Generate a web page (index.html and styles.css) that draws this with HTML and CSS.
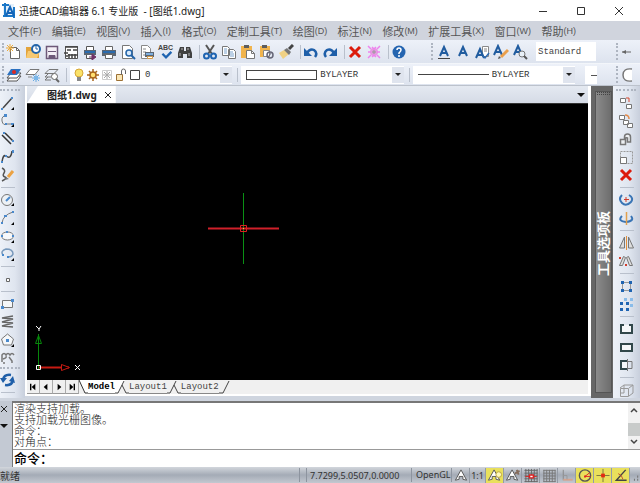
FILE: index.html
```
<!DOCTYPE html>
<html lang="zh-CN">
<head>
  <meta charset="UTF-8" />
  <meta name="viewport" content="width=device-width, initial-scale=1.0"/>
  <title>迅捷CAD编辑器 6.1 专业版</title>
  <link rel="stylesheet" href="styles.css">
</head>
<body>

  <header class="titlebar">
    <svg class="logo" viewBox="0 0 14 16"><path d="M1 1h11v12H1z" fill="#e4f1fc"/><path d="M0 2h7M3 0v14M1 13h12M12 4v11" stroke="#1c78c8" stroke-width="2" fill="none"/><path d="M4 13L8 4l4 9M6 10h5" stroke="#1565b8" stroke-width="2" fill="none"/></svg>
    <h1>迅捷CAD编辑器 6.1 专业版&nbsp; - [图纸1.dwg]</h1>
    <div class="window-buttons">
      <button aria-label="最小化"><svg viewBox="0 0 10 10"><path d="M1 5.5h8" stroke="#333"/></svg></button>
      <button aria-label="最大化"><svg viewBox="0 0 10 10"><path d="M1.5 1.5h7v7h-7z" stroke="#333" fill="none"/></svg></button>
      <button aria-label="关闭"><svg viewBox="0 0 10 10"><path d="M1 1l8 8M9 1l-8 8" stroke="#333"/></svg></button>
    </div>
  </header>

  <nav class="menu">
    <button>文件<small>(F)</small></button>
    <button>编辑<small>(E)</small></button>
    <button>视图<small>(V)</small></button>
    <button>插入<small>(I)</small></button>
    <button>格式<small>(O)</small></button>
    <button>定制工具<small>(T)</small></button>
    <button>绘图<small>(D)</small></button>
    <button>标注<small>(N)</small></button>
    <button>修改<small>(M)</small></button>
    <button>扩展工具<small>(X)</small></button>
    <button>窗口<small>(W)</small></button>
    <button>帮助<small>(H)</small></button>
  </nav>

  <div class="bar">
    <div class="tools standard">
      <i class="grip"></i>
      <button aria-label="新建"><svg viewBox="0 0 16 16"><path d="M4.500 3.500h6l3 3v8h-9z" fill="#fff" stroke="#666"/><path d="M10.500 3.500v3h3" fill="none" stroke="#666"/><path d="M4 0v8M0 4h8M1 1l6 6M7 1L1 7" stroke="#edaa38"/></svg></button>
      <button aria-label="打开"><svg viewBox="0 0 16 16"><path d="M1 3h5l1 2h7v9H1z" fill="#e3a43c"/><path d="M3 7h12l-3 7H1z" fill="#f7c971"/><circle cx="11" cy="5" r="4" fill="#fff" stroke="#2464a8" stroke-width="2"/><path d="M11 2v3h2" stroke="#2464a8" fill="none"/></svg></button>
      <button aria-label="保存"><svg viewBox="0 0 16 16"><path d="M2.500 2.500h11v12h-11z" fill="#f4eff6" stroke="#6d5878" stroke-width="1.500"/><path d="M4 7.500h8M5 11.500h6v3H5z" stroke="#6d5878" fill="#6d5878"/></svg></button>
      <button aria-label="另存为"><svg viewBox="0 0 16 16"><path d="M2.500 2.500h12v12h-12z" fill="#fff" stroke="#555"/><path d="M2 3h13M4 6h4M10 6h4M1 9h4M3 12h2M6 10v4M9 10v4M12 10v4M5 11h10" stroke="#444" stroke-width="1.500"/></svg></button>
      <button aria-label="导出打印"><svg viewBox="0 0 16 16"><path d="M4.500 2.500h7v4h-7zM4.500 10.500h7v4h-7z" fill="#fff" stroke="#555"/><path d="M2 6h12v5H2z" fill="#5b6571"/><path d="M3 7h10v2H3z" fill="#2b6bad"/><path d="M7 13h5M10 10l4 3-4 3z" fill="#713369" stroke="#713369"/></svg></button>
      <button aria-label="打印"><svg viewBox="0 0 16 16"><path d="M4.500 2.500h7v4h-7z" fill="#fff" stroke="#666"/><path d="M1 6h14v6H1z" fill="#5b6571"/><path d="M2 7h12v2H2z" fill="#2b6bad"/><path d="M4.500 10.500h7v4h-7z" fill="#fff" stroke="#666"/></svg></button>
      <button aria-label="打印预览"><svg viewBox="0 0 16 16"><path d="M2.500 1.500h7l3 3v10h-10z" fill="#fff" stroke="#777"/><circle cx="9" cy="9" r="3" fill="#d8eafb" stroke="#2464a8" stroke-width="1.500"/><path d="M11 11l4 4" stroke="#2464a8" stroke-width="2"/></svg></button>
      <button aria-label="发布"><svg viewBox="0 0 16 16"><path d="M2.500 1.500h6l3 3v10h-9z" fill="#fff" stroke="#888"/><path d="M4 5h3M4 8h3M4 11h2" stroke="#888"/><path d="M6 8h9v5H6z" fill="#5b6571"/><path d="M7 9h7v2H7z" fill="#7daede"/><path d="M8.500 12.500h5v2h-5z" fill="#fff" stroke="#d49a48"/></svg></button>
      <button aria-label="拼写检查" class="spell"><b>ABC</b><svg viewBox="0 0 16 10"><path d="M4 3l4 4 6-6" stroke="#1e63b1" stroke-width="2.500" fill="none"/></svg></button>
      <button aria-label="查找"><svg viewBox="0 0 16 16"><path d="M3 3h4v4h2V3h4l2 6v5h-5v-4H6v4H1V9z" fill="#414141"/><path d="M3 9v3M12 9v3M4 5h2M10 5h2" stroke="#bbb"/></svg></button>
      <i class="sep"></i>
      <button aria-label="剪切"><svg viewBox="0 0 16 16"><path d="M4 1l6 9M12 1L6 10" stroke="#555" stroke-width="2"/><circle cx="4.500" cy="12" r="2.500" fill="none" stroke="#1e63b1" stroke-width="2"/><circle cx="11.500" cy="12" r="2.500" fill="none" stroke="#1e63b1" stroke-width="2"/></svg></button>
      <button aria-label="复制"><svg viewBox="0 0 16 16"><path d="M1.500 2.500h5l2 2v7h-7zM7.500 5.500h5l2 2v7h-7z" fill="#fff" stroke="#777"/><path d="M3 5h3M3 7h3M3 9h3M9 8h3M9 10h4M9 12h4" stroke="#7ba2cc"/></svg></button>
      <button aria-label="粘贴"><svg viewBox="0 0 16 16"><path d="M1 2h11v12H1z" fill="#f1b44d"/><path d="M4 1h5v3H4z" fill="#5d5d5d"/><path d="M6.500 6.500h5l3 3v5h-8z" fill="#fff" stroke="#777"/><path d="M11.500 6.500v3h3" stroke="#777" fill="none"/></svg></button>
      <button aria-label="选择性粘贴"><svg viewBox="0 0 16 16"><path d="M1 2h10v11H1z" fill="#f1b44d"/><path d="M3 1h5v3H3z" fill="#5d5d5d"/><path d="M4.500 6.500h6v6h-6z" fill="#fff" stroke="#888"/><circle cx="11" cy="11" r="3" fill="none" stroke="#667" stroke-width="1.500"/><path d="M9 13l4-5" stroke="#667"/></svg></button>
      <button aria-label="格式刷"><svg viewBox="0 0 16 16"><path d="M1 9l5-3 5 4-6 5z" fill="#f0d184"/><path d="M6 6l3-2 4 4-2 3z" fill="#777"/><path d="M11 5l4-4" stroke="#444" stroke-width="3"/></svg></button>
      <i class="sep"></i>
      <button aria-label="撤销"><svg viewBox="0 0 16 16"><path d="M4 9q3-5 7-3 4 3 1 7" stroke="#1f5fa9" stroke-width="2.500" fill="none"/><path d="M1 4v8h8z" fill="#1f5fa9"/></svg></button>
      <button aria-label="重做"><svg viewBox="0 0 16 16"><path d="M12 9Q9 4 5 6q-4 3-1 7" stroke="#1f5fa9" stroke-width="2.500" fill="none"/><path d="M15 4v8H7z" fill="#1f5fa9"/></svg></button>
      <i class="sep"></i>
      <button aria-label="删除"><svg viewBox="0 0 16 16"><path d="M3 3l10 10M13 3L3 13" stroke="#dc1b0b" stroke-width="3"/></svg></button>
      <button aria-label="清理"><svg viewBox="0 0 16 16"><circle cx="8" cy="8" r="4" fill="#e69ae2"/><path d="M2 2l3 3M14 2l-3 3M2 14l3-3M14 14l-3-3M2 8h3M11 8h3M6 3l2 2 2-2M6 13l2-2 2 2" stroke="#ee82ee" stroke-width="1.500" fill="none"/><path d="M6 8h4M8 6v4" stroke="#999"/></svg></button>
      <i class="sep"></i>
      <button aria-label="帮助"><svg viewBox="0 0 16 16"><circle cx="8" cy="8" r="6.500" fill="#2464b0"/><path d="M6 6q0-2 2-2t2 2q0 1-2 3v1M8 11v2" stroke="#fff" stroke-width="1.500" fill="none"/></svg></button>
    </div>
    <div class="tools text-tools">
      <i class="grip"></i>
      <button aria-label="单行文字"><svg viewBox="0 0 16 16"><path d="M4 12l4-9 4 9M5 9h6" stroke="#215c9f" stroke-width="2" fill="none"/><path d="M2 14.500h12" stroke="#444"/></svg></button>
      <button aria-label="多行文字"><svg viewBox="0 0 16 16"><path d="M4 12l4-9 4 9M5 9h6" stroke="#215c9f" stroke-width="2" fill="none"/></svg></button>
      <button aria-label="文字样式"><svg viewBox="0 0 16 16"><path d="M8.500 2.500h6v10h-6z" fill="#fff" stroke="#888"/><path d="M10 5h3M10 7h3" stroke="#888"/><path d="M2 14l4-9 4 9M3 11h6" stroke="#215c9f" stroke-width="2" fill="none"/><path d="M9 12l2 2 4-5" stroke="#2d6ab0" stroke-width="1.500" fill="none"/></svg></button>
      <button aria-label="编辑文字"><svg viewBox="0 0 16 16"><path d="M1 11l4-9 4 9M2 8h6" stroke="#215c9f" stroke-width="2" fill="none"/><path d="M8 13l7-7" stroke="#eaa04d" stroke-width="3"/><path d="M5 15l1-3 2 2z" fill="#555"/></svg></button>
      <button aria-label="查找文字"><svg viewBox="0 0 16 16"><path d="M2 11l4-9 4 9M3 8h6" stroke="#215c9f" stroke-width="2" fill="none"/><circle cx="10" cy="10" r="3" fill="#e8f0f8" stroke="#777"/><path d="M12 12l3 3" stroke="#555" stroke-width="2"/></svg></button>
      <input class="style-box" type="text" value="Standard" aria-label="文字样式名">
    </div>
    <div class="tools corner">
      <i class="grip"></i>
      <button aria-label="直线标注"><svg viewBox="0 0 16 16"><path d="M2 8h9" stroke="#666"/><path d="M2 8l4-2v4z" fill="#666"/></svg></button>
    </div>
  </div>

  <div class="bar layers">
    <div class="tools">
      <i class="grip"></i>
      <button aria-label="图层管理"><svg viewBox="0 0 16 16"><path d="M5 9h10l-4 5H1z" fill="#fff" stroke="#555"/><path d="M5 6h10l-4 5H1z" fill="#fff" stroke="#555"/><path d="M5 2h10l-4 6H1z" fill="#2c71c0"/><circle cx="8" cy="5" r="2" fill="#df2a20"/></svg></button>
      <button aria-label="冻结图层"><svg viewBox="0 0 16 16"><path d="M5 2.500h9l-4 5H1z" fill="#fff" stroke="#777"/><path d="M3 10h4" stroke="#888"/><path d="M11 7v8M7 11h8M8 8l6 6M14 8l-6 6" stroke="#6aace2"/><circle cx="11" cy="11" r="2" fill="#78b6ea"/></svg></button>
      <button aria-label="查找图层"><svg viewBox="0 0 16 16"><path d="M5 2.500h9l-4 4H1zM4 7l-3 3h6M4 10l-3 3h6" fill="none" stroke="#777"/><circle cx="10.500" cy="9.500" r="3" fill="#fff" stroke="#666"/><path d="M12 12l3 3" stroke="#666" stroke-width="2"/></svg></button>
      <i class="sep"></i>
    </div>
    <div class="combo">
      <svg viewBox="0 0 14 16"><circle cx="7" cy="6" r="4" fill="#fbe268" stroke="#d6a736"/><path d="M5 10h4v4H5z" fill="#888"/></svg>
      <svg viewBox="0 0 14 16"><path d="M7 2v12M1 8h12M3 4l8 8M11 4l-8 8" stroke="#a8641b" stroke-width="1.500"/><circle cx="7" cy="8" r="3" fill="#ffdf70" stroke="#a8641b" stroke-width="1.500"/></svg>
      <svg viewBox="0 0 14 16"><path d="M2.500 3.500h9v9h-9z" fill="none" stroke="#ccc"/><path d="M7 4v8M3 8h8M4 5l6 6M10 5l-6 6" stroke="#a9a9a9"/></svg>
      <svg viewBox="0 0 14 16"><path d="M2.500 7.500h6v6h-6z" fill="#fae6b5" stroke="#9d7135"/><path d="M7.500 8V4q0-2 2-2t2 2v3" fill="none" stroke="#666"/></svg>
      <svg viewBox="0 0 14 16"><path d="M2.500 3.500h9v9h-9z" fill="#fff" stroke="#444"/></svg>
      <select aria-label="图层"><option>0</option></select>
      <i class="arrow"></i>
    </div>
    <i class="sep"></i>
    <div class="combo">
      <span class="swatch"></span>
      <select aria-label="颜色"><option>BYLAYER</option></select>
      <i class="arrow"></i>
    </div>
    <i class="sep"></i>
    <div class="combo">
      <span class="linetype"></span>
      <select aria-label="线型"><option>BYLAYER</option></select>
      <i class="arrow"></i>
    </div>
    <div class="lineweight"></div>
    <div class="tools corner">
      <i class="grip"></i>
      <button aria-label="圆弧"><svg viewBox="0 0 16 16"><path d="M12 2Q3 1 3 8t9 6" stroke="#777" fill="#fff" stroke-width="1.500"/></svg></button>
    </div>
  </div>

  <div class="workspace">
    <aside class="side">
      <i class="grip"></i>
      <button aria-label="直线"><svg viewBox="0 0 16 16"><path d="M3 13l9-10" stroke="#444" stroke-width="1.500"/><path d="M1 13h2v2H1zM11 2h2v2h-2z" fill="#4a89cc"/><path d="M14 12v3h-3z"/></svg></button>
      <button aria-label="多段线"><svg viewBox="0 0 16 16"><path d="M7 2Q1 3 2 8t5 3h7" stroke="#777" fill="none"/><path d="M4 1h3v3H4zM5 10h2v2H5zM11 10h3v2h-3z" fill="#4a89cc"/><path d="M14 11v3h-3z"/></svg></button>
      <button aria-label="双线"><svg viewBox="0 0 16 16"><path d="M2 4l9 9M5 2l8 8" stroke="#333" stroke-width="1.500"/><path d="M3 1h2v2H3zM12 9h2v2h-2z" fill="#4a89cc"/></svg></button>
      <button aria-label="样条曲线"><svg viewBox="0 0 16 16"><path d="M2 13q1-8 4-6 5 4 6-5" stroke="#444" stroke-width="1.500" fill="none"/><path d="M1 12h2v2H1zM12 1h2v3h-2zM5 6h2v2H5z" fill="#4a89cc"/></svg></button>
      <button aria-label="徒手画"><svg viewBox="0 0 16 16"><path d="M2 1q4 2 2 5t1 4-3 4" stroke="#555" fill="none" stroke-width="1.500"/><path d="M8 10l5-6" stroke="#eba243" stroke-width="3"/><path d="M5 13l1-3 3 2z" fill="#777"/></svg></button>
      <i class="sep"></i>
      <button aria-label="圆"><svg viewBox="0 0 16 16"><circle cx="7" cy="8" r="5.500" fill="#edf1f5" stroke="#777"/><path d="M6 9l4-4" stroke="#4a89cc" stroke-width="2"/><path d="M14 11v3h-3z"/></svg></button>
      <button aria-label="圆弧"><svg viewBox="0 0 16 16"><path d="M2 13Q3 5 13 2" stroke="#777" fill="none"/><path d="M1 12h2v2H1zM4 5h3v2H4zM12 1h2v2h-2z" fill="#4a89cc"/><path d="M14 12v3h-3z"/></svg></button>
      <button aria-label="椭圆"><svg viewBox="0 0 16 16"><ellipse cx="7.500" cy="8" rx="6" ry="4" fill="#f6f8fb" stroke="#777"/><path d="M1 7h2v2H1zM6 3h2v2H6zM12 7h2v2h-2z" fill="#4a89cc"/><path d="M14 12v3h-3z"/></svg></button>
      <button aria-label="椭圆弧"><svg viewBox="0 0 16 16"><path d="M3 9Q0 5 6 3q7 0 7 5-1 3-5 3" stroke="#7899bc" stroke-width="1.500" fill="none"/><path d="M2 8h2v2H2zM7 10h2v2H7z" fill="#4a89cc"/><path d="M14 12v3h-3z"/></svg></button>
      <i class="sep"></i>
      <button aria-label="点"><svg viewBox="0 0 16 16"><path d="M6.500 7.500h3v3h-3z" fill="#fff" stroke="#666"/></svg></button>
      <i class="sep"></i>
      <button aria-label="矩形"><svg viewBox="0 0 16 16"><path d="M2.500 4.500h10v7h-10z" fill="#f5f7f9" stroke="#777"/><path d="M1 10h3v3H1zM11 3h3v3h-3z" fill="#4a89cc"/></svg></button>
      <button aria-label="螺旋"><svg viewBox="0 0 16 16"><path d="M13 2L2 4l11 1L2 8l11 1L2 12l11 1" stroke="#666" stroke-width="1.500" fill="none"/></svg></button>
      <button aria-label="多边形"><svg viewBox="0 0 16 16"><path d="M7.500 2l6 5-2 6h-8l-2-6z" fill="#f5f7f9" stroke="#777"/><path d="M6 7h3v3H6z" fill="#4a89cc"/><path d="M14 12v3h-3z"/></svg></button>
      <button aria-label="云线"><svg viewBox="0 0 16 16"><path d="M2 12V5q2-3 4 0 2-3 4 0 2-3 4 0M3 9q4-1 3-3M9 7l3 4v2M3 13h2" stroke="#777" fill="none" stroke-width="1.500"/></svg></button>
      <i class="grip"></i>
      <button aria-label="刷新"><svg viewBox="0 0 16 16"><path d="M3 8q1-6 8-5M13 8q-1 6-8 5" stroke="#1f5fa9" stroke-width="2.500" fill="none"/><path d="M0 6h7l-4 5zM9 9l4-5 2 7z" fill="#1f5fa9"/></svg></button>
      <i class="sep"></i>
    </aside>

    <main>
      <div class="doc-tabs">
        <div class="doc-tab"><a href="#drawing">图纸1.dwg</a><button aria-label="关闭图纸"><svg viewBox="0 0 10 10"><path d="M2 2l6 6M8 2L2 8" stroke="#222"/></svg></button></div>
        <button class="more" aria-label="图纸列表"><i class="arrow-down"></i></button>
      </div>
      <div class="canvas" id="drawing">
        <svg class="crosshair" viewBox="0 0 71 71"><path d="M35.500 0v71" stroke="#0a9014"/><path d="M0 35.500h71" stroke="#d0202a" stroke-width="2"/><path d="M32.500 32.500h6v6h-6z" stroke="#df2020" fill="none"/><path d="M35 35h1v1h-1z" fill="#e6d32d"/></svg>
        <svg class="ucs" viewBox="0 0 50 54"><path d="M5.500 47V12" stroke="#07870b"/><path d="M2.500 21.500l3-8 3 8z" stroke="#07870b" fill="none"/><path d="M6 45.500h30" stroke="#c71a12" stroke-width="2"/><path d="M28.500 42.500l8 3-8 3z" stroke="#c71a12" fill="#000"/><path d="M3.500 43.500h4v4h-4z" stroke="#fff" fill="none"/><path d="M3 4l3 3 2-3M6 7v2M42 43l5 5M47 43l-5 5" stroke="#fff" fill="none"/></svg>
      </div>
      <div class="layouts">
        <button class="nav" aria-label="第一个"><svg viewBox="0 0 13 13"><path d="M4 3v7" stroke="#000" stroke-width="1.500"/><path d="M9 3v7L5 6.500z"/></svg></button>
        <button class="nav" aria-label="上一个"><svg viewBox="0 0 13 13"><path d="M8 3v7L4 6.500z"/></svg></button>
        <button class="nav" aria-label="下一个"><svg viewBox="0 0 13 13"><path d="M5 3v7l4-3.500z"/></svg></button>
        <button class="nav" aria-label="最后一个"><svg viewBox="0 0 13 13"><path d="M9 3v7" stroke="#000" stroke-width="1.500"/><path d="M4 3v7l4-3.500z"/></svg></button>
        <svg class="edge" viewBox="0 0 9 14"><path d="M0 0h9v13H6z" fill="#fff"/><path d="M0 0l6 13h3" stroke="#333" fill="none"/></svg>
        <button class="layout active">Model</button>
        <svg class="edge wide" viewBox="0 0 14 14"><path d="M0 0h10L4 13H0z" fill="#fff"/><path d="M0 13h3L9 1M7 5l4 8h3" stroke="#444" fill="none"/></svg>
        <button class="layout">Layout1</button>
        <svg class="edge wide" viewBox="0 0 14 14"><path d="M0 13h3L9 1M7 5l4 8h3" stroke="#444" fill="none"/></svg>
        <button class="layout">Layout2</button>
        <svg class="edge wide" viewBox="0 0 14 14"><path d="M0 13h4l6-12" stroke="#444" fill="none"/></svg>
      </div>
    </main>

    <aside class="palette">
      <div class="palette-body"><i class="dots"></i><span>工具选项板</span></div>
    </aside>

    <aside class="side modify">
      <i class="grip"></i>
      <button aria-label="复制对象"><svg viewBox="0 0 16 16"><path d="M2.500 3.500h5v4h-5zM8.500 9.500h5v4h-5z" fill="#fff" stroke="#777"/><path d="M8 3h3v4" stroke="#d8482c" fill="none"/></svg></button>
      <button aria-label="多重复制"><svg viewBox="0 0 16 16"><path d="M1.500 2.500h5v4h-5zM5.500 7.500h5v4h-5zM9.500 10.500h5v4h-5z" fill="#fff" stroke="#777"/><path d="M7 2q4 0 4 4" stroke="#e28b4b" stroke-width="1.500" fill="none"/></svg></button>
      <button aria-label="偏移"><svg viewBox="0 0 16 16"><path d="M2.500 13.500v-5h4V6q0-3 3-3t3 3v5h-3V7q-2-1-2 1v5.500z" stroke="#777" fill="#eceff2" stroke-width="1.500"/></svg></button>
      <button aria-label="缩放"><svg viewBox="0 0 16 16"><path d="M2.500 2.500h12v12h-12z" fill="none" stroke="#999" stroke-dasharray="2 1"/><path d="M2.500 8.500h6v6h-6z" fill="#fff" stroke="#777"/></svg></button>
      <button aria-label="删除"><svg viewBox="0 0 16 16"><path d="M3 3l10 10M13 3L3 13" stroke="#dc1b0b" stroke-width="3"/></svg></button>
      <i class="sep"></i>
      <button aria-label="旋转"><svg viewBox="0 0 16 16"><path d="M4 3q-4 4 0 8t9-1q3-4-2-7" stroke="#3a75b5" stroke-width="2" fill="none"/><path d="M8 5v5M6 7.500h5" stroke="#d13e2d"/></svg></button>
      <button aria-label="三维旋转"><svg viewBox="0 0 16 16"><path d="M4 6q-5 5 4 6 9-1 5-6" stroke="#3a75b5" stroke-width="2" fill="none"/><path d="M8.500 2v13" stroke="#e2a04d" stroke-width="1.500"/></svg></button>
      <i class="sep"></i>
      <button aria-label="镜像"><svg viewBox="0 0 16 16"><path d="M6.500 2v11h-5zM10.500 2v11h5z" fill="#ddd" stroke="#777"/><path d="M8.500 1v14" stroke="#e28f38"/></svg></button>
      <button aria-label="三维镜像"><svg viewBox="0 0 16 16"><path d="M5.500 3.500l-4 9h3l3-8zM10.500 3.500l4 9h-3l-3-8z" fill="#ddd" stroke="#777"/><path d="M1 4h2v2H1zM7 11h2v2H7z" fill="#d13e2d"/></svg></button>
      <i class="sep"></i>
      <button aria-label="编组"><svg viewBox="0 0 16 16"><path d="M4.500 4.500h8v8h-8z" fill="none" stroke="#999"/><path d="M3 3h3v3H3zM11 3h3v3h-3zM3 11h3v3H3zM11 11h3v3h-3z" fill="#1f64b2"/></svg></button>
      <button aria-label="阵列"><svg viewBox="0 0 16 16"><path d="M6 2h3v3H6zM12 2h3v3h-3zM12 8h3v3h-3z" fill="#8abce9"/><path d="M2 6h3v3H2zM8 6h3v3H8zM2 12h3v3H2zM8 12h3v3H8z" fill="#1f64b2"/></svg></button>
      <i class="sep"></i>
      <button aria-label="打断"><svg viewBox="0 0 16 16"><path d="M6 4H3v8h11V4h-3" fill="#f5f7f9" stroke="#31474a" stroke-width="2"/></svg></button>
      <button aria-label="合并"><svg viewBox="0 0 16 16"><path d="M3 5h11v7H3z" fill="#f5f7f9" stroke="#31474a" stroke-width="2"/></svg></button>
      <button aria-label="修剪"><svg viewBox="0 0 16 16"><path d="M9 4H3v8h6" fill="#f5f7f9" stroke="#31474a" stroke-width="2"/><path d="M9 4.500h5v7H9M9.500 2v12" stroke="#777" fill="none"/></svg></button>
      <i class="sep"></i>
      <button aria-label="三维"><svg viewBox="0 0 16 16"><path d="M2.500 6.500h8v8h-8zM6 3h9v8l-4 3M2 6l4-3M11 6l4-3M6 3v8H3" fill="none" stroke="#999"/></svg></button>
    </aside>
  </div>

  <section class="command">
    <div class="command-tools">
      <button aria-label="关闭命令行"><svg viewBox="0 0 10 10"><path d="M2 2l6 6M8 2L2 8" stroke="#222"/></svg></button>
      <button aria-label="命令行菜单"><i class="arrow-down"></i></button>
    </div>
    <div class="command-body">
      <div class="history">
        <div class="log">
          <p>渲染支持加载。</p>
          <p>支持加载光栅图像。</p>
          <p>命令：</p>
          <p>对角点：</p>
        </div>
        <div class="scroll">
          <svg viewBox="0 0 10 6"><path d="M2 5l3-3 3 3" stroke="#444" stroke-width="1.500" fill="none"/></svg>
          <i class="thumb"></i>
          <svg viewBox="0 0 10 6"><path d="M2 1l3 3 3-3" stroke="#444" stroke-width="1.500" fill="none"/></svg>
        </div>
      </div>
      <div class="prompt">
        <label for="cmd">命令：</label>
        <input type="text" id="cmd">
      </div>
    </div>
  </section>

  <footer class="status">
    <span class="ready">就绪</span>
    <span class="blank"></span>
    <span class="coords">7.7299,5.0507,0.0000</span>
    <span class="renderer">OpenGL</span>
    <button aria-label="注释比例"><svg viewBox="0 0 16 16"><path d="M8 2l6 11-4-1V9H6v3l-4 1z" fill="#fff" stroke="#555"/></svg></button>
    <button class="scale">1:1</button>
    <button class="on" aria-label="注释可见性"><svg viewBox="0 0 16 16"><path d="M7 2l6 11-4-1V9H5v3l-4 1z" fill="#fff" stroke="#555"/><circle cx="12" cy="7" r="3" fill="#fff9bd" stroke="#b9a23a"/></svg></button>
    <button aria-label="自动缩放"><svg viewBox="0 0 16 16"><path d="M7 2l6 11-4-1V9H5v3l-4 1z" fill="#fff" stroke="#555"/><path d="M10 6l5-3M12 2l2 5" stroke="#856c5c" stroke-width="2"/></svg></button>
    <button aria-label="捕捉"><svg viewBox="0 0 16 16"><path d="M1 2.500h14M1 5.500h14M1 8.500h14M1 11.500h14M1 14.500h14M2.500 1v14M5.500 1v14M8.500 1v14M11.500 1v14M14.500 1v14" stroke="#666"/><path d="M2 9h12" stroke="#d22"/><path d="M6.500 7.500h4v3h-4z" fill="#fff" stroke="#d22" stroke-width="1.500"/></svg></button>
    <button aria-label="栅格"><svg viewBox="0 0 16 16"><path d="M2 2.500h13M2 5.500h13M2 8.500h13M2 11.500h13M2 14.500h13M2.500 2v13M5.500 2v13M8.500 2v13M11.500 2v13M14.500 2v13" stroke="#777"/></svg></button>
    <button aria-label="正交"><svg viewBox="0 0 16 16"><path d="M4 2v11" stroke="#888"/><path d="M4 12.500h10" stroke="#d6a38e" stroke-width="2"/><path d="M4 8h4v4" stroke="#999" fill="none"/></svg></button>
    <button class="on" aria-label="极轴"><svg viewBox="0 0 16 16"><circle cx="8" cy="8" r="6" fill="none" stroke="#555" stroke-width="1.500"/><path d="M8 9l5-4M8 9h6" stroke="#d22"/><path d="M7 8h2v2H7z" fill="#d22"/></svg></button>
    <button class="on" aria-label="对象捕捉"><svg viewBox="0 0 16 16"><path d="M8 1v14M1 8h14" stroke="#77743d"/><path d="M6 6h4v4H6z" fill="#e32b12"/></svg></button>
    <button class="on" aria-label="对象追踪"><svg viewBox="0 0 16 16"><path d="M13 2L3 13h11" stroke="#444" stroke-width="1.500" fill="none"/><path d="M5 6q4 1 5 6" stroke="#c34a2d" fill="none"/></svg></button>
    <svg class="resize" viewBox="0 0 8 14"><path d="M6 8h1M3 11h1M6 11h1" stroke="#777" stroke-width="2"/></svg>
  </footer>

</body>
</html>
```
FILE: styles.css
```
* {
  box-sizing: border-box;
}

body {
  margin: 0;
  height: 100vh;
  min-height: 420px;
  display: flex;
  flex-direction: column;
  overflow: hidden;
  font-family: "Noto Sans", "Noto Sans CJK SC", sans-serif;
  font-size: 11px;
  color: #444;
  background: #cfd5df;
}

button, input, select {
  margin: 0;
  padding: 0;
  border: none;
  background: none;
  font: inherit;
  color: inherit;
}

button {
  display: flex;
  align-items: center;
  justify-content: center;
  flex: none;
}

svg {
  display: block;
  flex: none;
}

/* title */
.titlebar {
  height: 21px;
  flex: none;
  display: flex;
  align-items: center;
  padding: 0 2px;
  background: #fff;
}

.logo {
  width: 14px;
  height: 16px;
}

.titlebar h1 {
  margin: 0 0 0 3px;
  font-size: 10px;
  line-height: 18px;
  font-weight: normal;
  color: #222;
  white-space: nowrap;
}

.window-buttons {
  display: flex;
  margin-left: auto;
}

.window-buttons button {
  width: 38px;
  height: 18px;
}

.window-buttons svg {
  width: 10px;
  height: 10px;
}

.menu {
  height: 19px;
  flex: none;
  display: flex;
  justify-content: space-between;
  padding: 0 64px 0 8px;
  background: #d0d4dd;
  color: #555;
}

.menu button {
  white-space: nowrap;
}

.menu small {
  font-family: "Liberation Sans", sans-serif;
  font-size: 9px;
}

/* toolbars */
.bar {
  height: 24px;
  flex: none;
  display: flex;
  align-items: center;
  background: linear-gradient(#edf1f9, #dde3ee);
  border-bottom: 1px solid #f3f6fa;
}

.bar.layers {
  height: 22px;
  border-bottom: 1px solid #bcc2cc;
}

.tools {
  display: flex;
  align-items: center;
}

.tools button {
  width: 19px;
  height: 20px;
}

.tools svg {
  width: 16px;
  height: 16px;
}

.standard {
  width: 429px;
}

.text-tools {
  flex: 1;
}

.text-tools .grip {
  margin-right: 1px;
}

.corner {
  flex: none;
  width: 26px;
  margin-left: auto;
  overflow: hidden;
}

.grip {
  flex: none;
  width: 4px;
  height: 17px;
  border-right: 2px dotted #aeb5c1;
}

.sep {
  flex: none;
  width: 6px;
  height: 14px;
  border-right: 1px solid #b9c0cc;
}

.tools .spell {
  flex-direction: column;
}

.spell b {
  font: bold 7px/7px "Liberation Sans", sans-serif;
}

.tools .spell svg {
  height: 9px;
}

.style-box {
  width: 60px;
  height: 19px;
  margin-left: 7px;
  padding: 0 2px;
  background: #fff;
  font-family: "Liberation Mono", monospace;
  font-size: 9px;
}

.combo {
  flex: 1;
  display: flex;
  align-items: center;
  height: 18px;
  margin-left: 3px;
  padding-left: 2px;
  background: #fff;
}

.combo svg {
  width: 14px;
  height: 16px;
}

.combo select {
  flex: 1;
  min-width: 0;
  padding-left: 3px;
  appearance: none;
  font-family: "Liberation Mono", monospace;
  font-size: 9px;
  color: #333;
}

.arrow {
  width: 12px;
  height: 16px;
  display: flex;
  align-items: center;
  justify-content: center;
  background: #dfe4ee;
}

.arrow::after {
  content: "";
  border: 3px solid transparent;
  border-top: 3px solid #222;
  border-bottom: none;
}

.swatch {
  width: 71px;
  height: 10px;
  margin-left: 3px;
  border: 1px solid #444;
}

.linetype {
  width: 71px;
  height: 1px;
  margin-left: 3px;
  background: #444;
}

.lineweight {
  flex: none;
  width: 12px;
  height: 18px;
  margin: 0 17px 0 10px;
  background: linear-gradient(#555, #555) 6px 9px / 6px 1px no-repeat #fff;
}

/* drawing area */
.workspace {
  flex: 1;
  min-height: 0;
  display: flex;
}

.side {
  width: 25px;
  flex: none;
  overflow: hidden;
  background: linear-gradient(90deg, #edf1f8, #dfe5ef 60%, #c8cfdc);
}

.side button {
  width: 16px;
  height: 18px;
}

.side svg {
  width: 16px;
  height: 16px;
}

.side .grip {
  display: block;
  width: 20px;
  height: 5px;
  border-right: none;
  border-bottom: 2px dotted #aeb5c1;
  margin-bottom: 3px;
}

.side button + .grip {
  height: 2px;
  margin-bottom: 2px;
}

.side .sep {
  display: block;
  width: 14px;
  height: 4px;
  margin: 0 0 3px 1px;
  border-right: none;
  border-bottom: 1px solid #b9c0cc;
}

.side.modify {
  width: 27px;
  padding-left: 3px;
}

.side.modify button {
  width: 20px;
}

.side.modify .sep {
  margin-left: 4px;
}

main {
  flex: 1;
  min-width: 0;
  display: flex;
  flex-direction: column;
  border: 2px solid #fff;
  border-top: none;
  border-right-width: 3px;
  margin-bottom: 2px;
}

.doc-tabs {
  height: 18px;
  flex: none;
  display: flex;
  justify-content: space-between;
  background: linear-gradient(#e4e9f1, #d5dbe6);
  border-bottom: 1px solid #333;
}

.doc-tab {
  display: flex;
  align-items: center;
  padding: 0 3px 0 20px;
  background: #fff;
  clip-path: polygon(11px 0, 100% 0, 100% 100%, 0 100%);
}

.doc-tab a {
  color: #222;
  font-size: 10px;
  line-height: 16px;
  font-weight: bold;
  text-decoration: none;
}

.doc-tab button {
  margin-left: 6px;
}

.doc-tab svg, .command-tools svg {
  width: 10px;
  height: 10px;
}

.more {
  width: 14px;
}

.arrow-down {
  border: 4px solid transparent;
  border-top-color: #111;
  border-bottom: none;
}

.canvas {
  flex: 1;
  min-height: 0;
  position: relative;
  background: #000;
}

.crosshair {
  position: absolute;
  left: 181px;
  top: 89px;
  width: 71px;
  height: 71px;
}

.ucs {
  position: absolute;
  left: 6px;
  bottom: 4px;
  width: 50px;
  height: 54px;
}

.layouts {
  height: 14px;
  flex: none;
  display: flex;
  align-items: center;
  background: #f0f0f0;
}

.nav {
  width: 13px;
  height: 14px;
  border-right: 1px solid #aaa;
  border-bottom: 1px solid #999;
}

.nav svg {
  width: 12px;
  height: 12px;
}

.edge {
  width: 9px;
  height: 14px;
}

.edge.wide {
  width: 14px;
}

.layout {
  height: 14px;
  font-family: "Liberation Mono", monospace;
  font-size: 9px;
  border-bottom: 1px solid #888;
}

.layout.active {
  font-weight: bold;
  color: #000;
  background: #fff;
}

.palette {
  width: 22px;
  flex: none;
  padding: 5px 1px 5px 4px;
  background: #666;
}

.palette-body {
  height: 100%;
  display: flex;
  flex-direction: column;
  align-items: center;
  border: 1px solid #555;
  background: linear-gradient(90deg, #8b8b8b, #6d6d6d);
  color: #fff;
  font-size: 13px;
  line-height: 15px;
  font-weight: bold;
}

.palette-body span {
  margin: auto 0;
  writing-mode: vertical-rl;
  text-orientation: sideways;
  transform: rotate(180deg);
}

.dots {
  width: 13px;
  height: 3px;
  border: 1px dotted #444;
  border-width: 1px 0;
}

/* command line */
.command {
  height: 66px;
  flex: none;
  display: flex;
  margin-top: 3px;
}

.command-tools {
  width: 12px;
  flex: none;
  display: flex;
  flex-direction: column;
  gap: 9px;
  padding-top: 4px;
  overflow: hidden;
  background: #c3c9d3;
}

.command-tools button {
  width: 8px;
  height: 8px;
}

.command-body {
  flex: 1;
  border: 1px solid #777;
  border-width: 2px 0 0 1px;
  background: #fff;
}

.history {
  display: flex;
  height: 47px;
  border-bottom: 1px solid #999;
}

.log {
  flex: 1;
  padding-left: 1px;
  color: #222;
}

.log p {
  margin: 0;
  font-family: "Noto Sans CJK SC", sans-serif;
  font-size: 11px;
  line-height: 11px;
  font-weight: 300;
}

.scroll {
  width: 12px;
  display: flex;
  flex-direction: column;
  align-items: center;
  justify-content: space-between;
  padding: 4px 0;
  background: #f1f1f1;
}

.scroll svg {
  width: 10px;
  height: 6px;
}

.thumb {
  width: 12px;
  height: 13px;
  margin-top: 7px;
  background: #c8cbca;
}

.prompt {
  display: flex;
  align-items: center;
  height: 16px;
  padding-left: 1px;
}

.prompt label {
  font-family: "Noto Sans CJK SC", sans-serif;
  font-size: 13px;
  line-height: 16px;
  font-weight: 500;
  color: #000;
}

.prompt input {
  flex: 1;
  height: 14px;
}

/* status bar */
.status {
  height: 16px;
  flex: none;
  display: flex;
  align-items: center;
  background: linear-gradient(#d2d6dc, #a4abb6 50%, #c3c8d0);
  font-size: 9px;
  color: #333;
}

.ready {
  flex: 1;
  font-size: 10px;
}

.blank {
  width: 8px;
  height: 14px;
  border: 1px solid #8d949f;
  border-width: 0 1px;
}

.coords {
  width: 104px;
  padding-left: 3px;
}

.renderer {
  width: 41px;
  height: 14px;
  padding-left: 4px;
  line-height: 14px;
  border: 1px solid #8d949f;
  border-width: 0 1px;
}

.status button {
  width: 18px;
  height: 15px;
  border: 1px solid #949ba5;
  border-width: 0 1px 0 0;
}

.status .scale {
  width: 16px;
}

.status .on {
  background: #e9e05c;
}

.status svg {
  width: 16px;
  height: 15px;
}

.status .resize {
  width: 10px;
}
```
